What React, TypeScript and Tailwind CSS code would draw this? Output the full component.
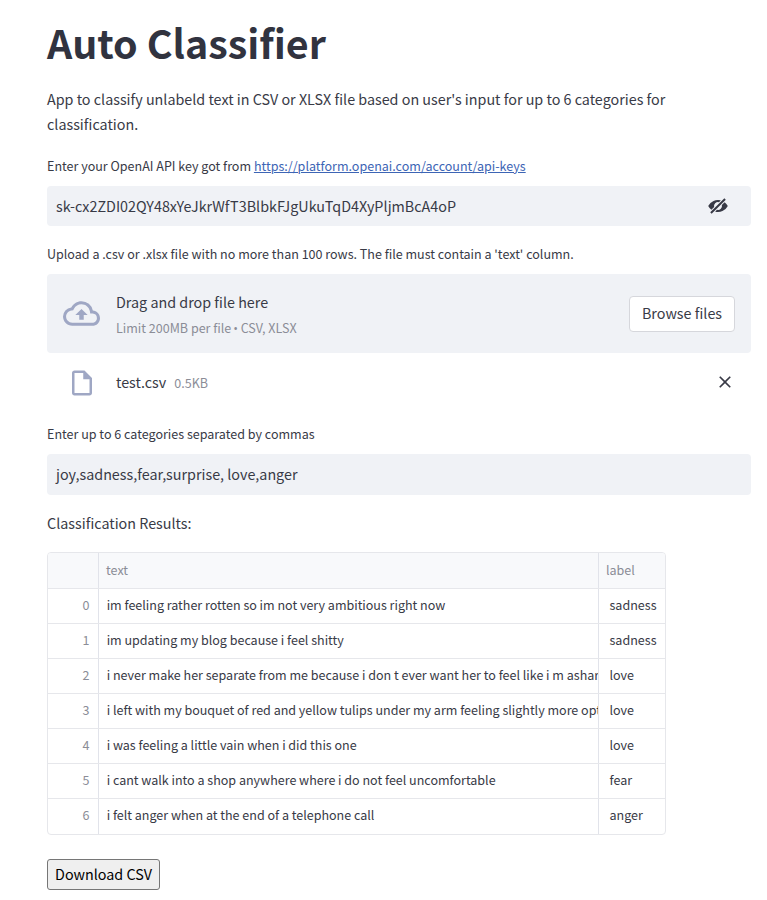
import { MdClose, MdOutlineCloudUpload, MdOutlineInsertDriveFile } from "react-icons/md";

const rows = [
  ["im feeling rather rotten so im not very ambitious right now", "sadness"],
  ["im updating my blog because i feel shitty", "sadness"],
  ["i never make her separate from me because i don t ever want her to feel like i m ashar", "love"],
  ["i left with my bouquet of red and yellow tulips under my arm feeling slightly more opt", "love"],
  ["i was feeling a little vain when i did this one", "love"],
  ["i cant walk into a shop anywhere where i do not feel uncomfortable", "fear"],
  ["i felt anger when at the end of a telephone call", "anger"],
];

function HideIcon() {
  return (
    <svg viewBox="0 0 20 20" className="size-5" fill="currentColor" aria-hidden="true">
      <path d="M12.81 4.36l-1.77 1.78a4 4 0 00-4.9 4.9l-2.76 2.75C2.06 12.79.96 11.49.2 10a11 11 0 0112.6-5.64zm3.8 1.85c1.33 1 2.43 2.3 3.2 3.79a11 11 0 01-12.62 5.64l1.77-1.78a4 4 0 004.9-4.9l2.76-2.75zm-.25-3.99l1.42 1.42L3.64 17.78l-1.42-1.42L16.36 2.22z" />
    </svg>
  );
}

export default function App() {
  return (
    <main className="h-[900px] w-[767px] overflow-hidden bg-white pl-[47px] font-['Noto_Sans_CJK_SC',sans-serif] text-[14.33px] text-[#383a46]">
      <div className="w-[704px]">
        <h1 className="pt-[15px] text-[39.4px] leading-[53px] font-bold whitespace-nowrap text-[#31333f]">Auto Classifier</h1>
        <p className="mt-[18px] h-[51px] w-[660px] leading-[25px]">
          App to classify unlabeld text in CSV or XLSX file based on user's input for up to 6 categories for
          classification.
        </p>
        <p className="mt-[19px] h-5 text-[12.54px] leading-5">
          Enter your OpenAI API key got from{" "}
          <a href="#" className="text-[#3d65b5] underline">https://platform.openai.com/account/api-keys</a>
        </p>

        <div className="mt-[10px] flex h-10 items-center justify-between rounded bg-[#f0f2f6] pr-[23px] pl-[9px]">
          <span>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</span>
          <HideIcon />
        </div>

        <p className="mt-[18px] h-5 text-[12.54px] leading-5">
          Upload a .csv or .xlsx file with no more than 100 rows. The file must contain a 'text' column.
        </p>
        <section className="mt-[10px] flex h-[79px] items-center rounded bg-[#f0f2f6] px-4">
          <MdOutlineCloudUpload className="size-[37px] text-[#9fa7c4]" />
          <div className="ml-4 flex-1 pt-0.5">
            <div className="leading-[26px]">Drag and drop file here</div>
            <div className="text-[12.54px] leading-[25px] text-[#8b8d97]">
              Limit 200MB per file <span className="-ml-px font-['Open_Sans',sans-serif] text-[12.54px]">•</span> CSV, XLSX
            </div>
          </div>
          <button className="h-9 w-[106px] rounded border border-[#d6d7dc] bg-white pb-0.5">Browse files</button>
        </section>
        <div className="flex h-[60px] items-center pr-4 pl-[19.5px]">
          <MdOutlineInsertDriveFile className="size-[30px] text-[#9fa7c4]" />
          <span className="ml-[19.5px] pb-0.5">test.csv</span>
          <span className="ml-2 flex-1 text-[12.54px] text-[#8b8d97]">0.5KB</span>
          <MdClose className="mb-0.5 size-5" />
        </div>

        <p className="mt-[11px] h-5 text-[12.54px] leading-5">Enter up to 6 categories separated by commas</p>
        <div className="mt-[10px] flex h-[41px] items-center rounded bg-[#f0f2f6] pb-0.5 pl-[9px]">
          joy,sadness,fear,surprise, love,anger
        </div>
        <p className="mt-[15px] h-[26px] leading-[26px]">Classification Results:</p>

        <div className="mt-4 w-[619px] overflow-hidden rounded border border-[#e6e7eb] text-[12.54px]">
          <div className="grid h-9 grid-cols-[51px_500px_1fr] border-b border-[#e6e7eb] bg-[#f8f9fb] leading-[33px] text-[#8b8d97]">
            <div className="border-r border-[#e1e3ea]" />
            <div className="border-r border-[#e1e3ea] pl-[7px]">text</div>
            <div className="pl-[7px]">label</div>
          </div>
          {rows.map(([text, label], i) => (
            <div
              key={text}
              className="grid h-[35px] grid-cols-[51px_500px_1fr] border-b border-[#e6e7eb] leading-8 last:border-b-0"
            >
              <div className="border-r border-[#e1e3ea] pr-[8.5px] text-right text-[#8b8d97]">{i}</div>
              <div className="overflow-hidden border-r border-[#e1e3ea] pl-[7.7px] tracking-[-0.012px] whitespace-nowrap">{text}</div>
              <div className="pl-[10.5px]">{label}</div>
            </div>
          ))}
        </div>

        <button className="mt-6 block h-[31px] w-[113px] rounded-[3px] border border-[#767676] bg-[#efefef] pb-0.5 text-black">
          Download CSV
        </button>
      </div>
    </main>
  );
}
